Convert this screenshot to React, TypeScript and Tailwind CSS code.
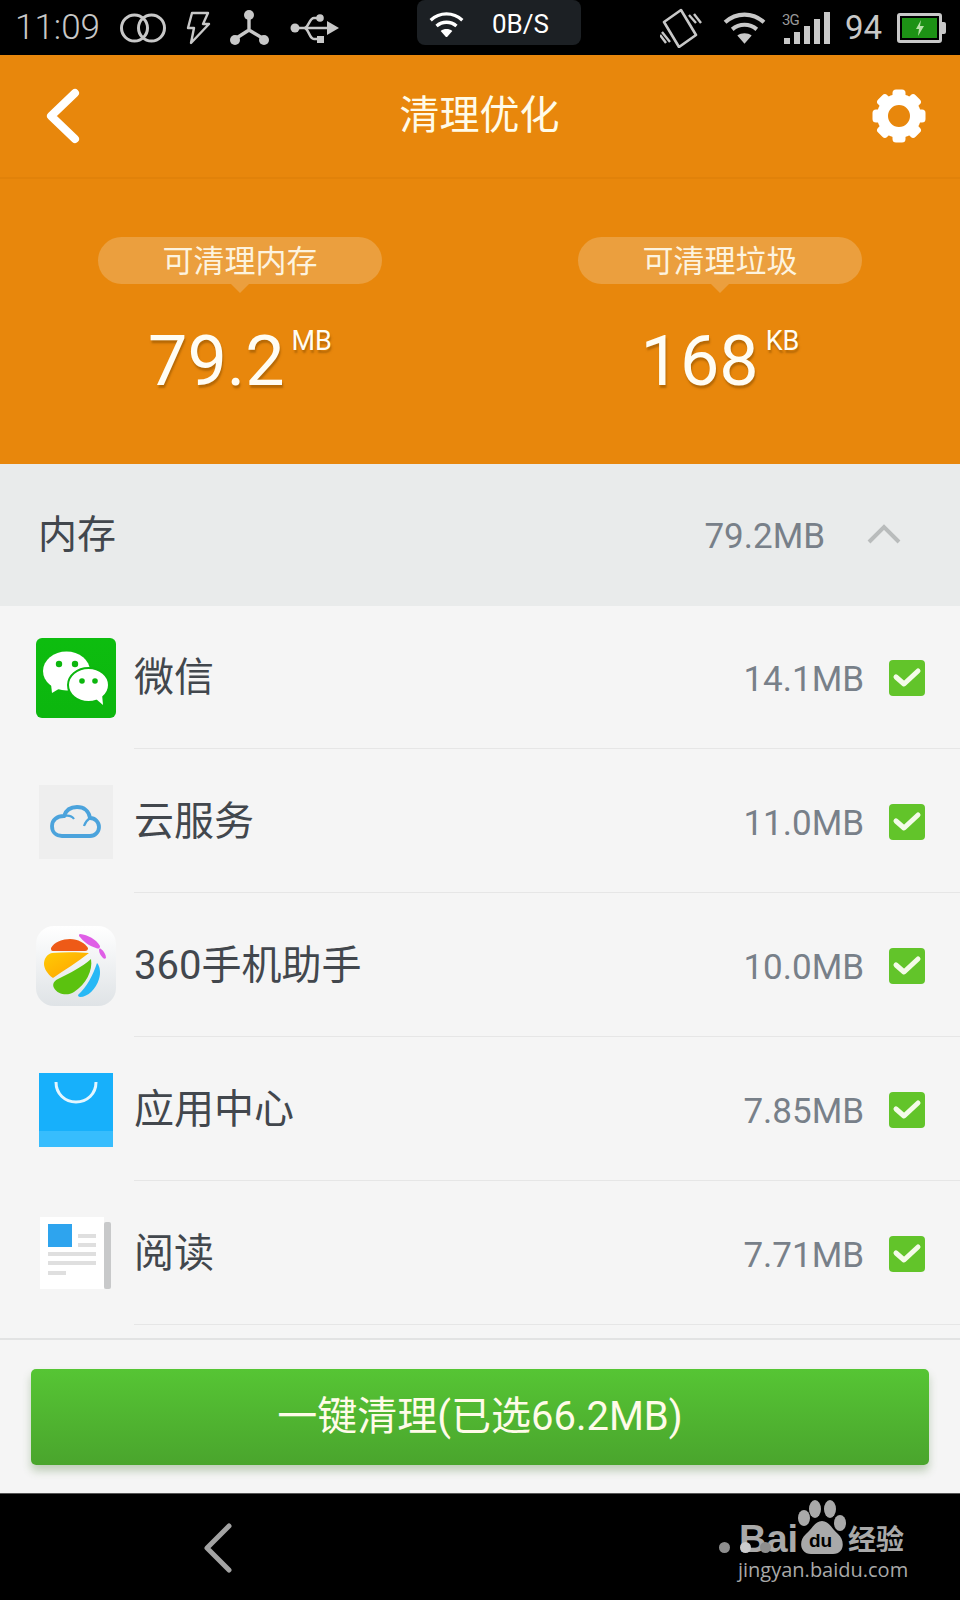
const font = { fontFamily: '"Roboto", "Noto Sans CJK SC", sans-serif' }

const rows = [
  { name: "微信", size: "14.1MB", icon: <WeChatIcon /> },
  { name: "云服务", size: "11.0MB", icon: <CloudIcon /> },
  { name: "360手机助手", size: "10.0MB", icon: <AssistantIcon /> },
  { name: "应用中心", size: "7.85MB", icon: <BagIcon /> },
  { name: "阅读", size: "7.71MB", icon: <ReaderIcon /> },
]

function WeChatIcon() {
  return (
    <svg width="80" height="80" viewBox="0 0 80 80">
      <defs>
        <linearGradient id="wx" x1="0" y1="0" x2="0" y2="1">
          <stop offset="0" stopColor="#0dbd0f" />
          <stop offset="1" stopColor="#0cb60e" />
        </linearGradient>
      </defs>
      <rect width="80" height="80" rx="6" fill="url(#wx)" />
      <ellipse cx="30.5" cy="33" rx="23.5" ry="19.5" fill="#fff" />
      <path d="M15 46l1 9 10-6z" fill="#fff" />
      <ellipse cx="52.5" cy="47" rx="20.5" ry="17" fill="#fff" stroke="#0cb60e" strokeWidth="2" />
      <path d="M60 61l7 6-1-11z" fill="#fff" />
      <circle cx="23" cy="26" r="3.2" fill="#0cb60e" />
      <circle cx="39" cy="26" r="3.2" fill="#0cb60e" />
      <circle cx="46" cy="43" r="2.8" fill="#0cb60e" />
      <circle cx="59" cy="43" r="2.8" fill="#0cb60e" />
    </svg>
  )
}

function CloudIcon() {
  return (
    <svg width="74" height="74" viewBox="0 0 74 74">
      <rect width="74" height="74" fill="#eeeeee" />
      <path d="M23 51h28c5 0 9-4 9-9s-4-9-9-9c-1-7-6-11-13-11-6 0-11 3-13 9-7 0-12 4-12 10 0 6 4 10 10 10z" fill="none" stroke="#4ba3dc" strokeWidth="3.8" />
      <path d="M25 31c5-1 8 0 10 3M45 41c1-3 3-6 6-8" fill="none" stroke="#4ba3dc" strokeWidth="2.2" />
    </svg>
  )
}

function AssistantIcon() {
  return (
    <svg width="80" height="80" viewBox="0 0 80 80">
      <defs>
        <linearGradient id="tile" x1="0" y1="0" x2="0" y2="1">
          <stop offset="0" stopColor="#ffffff" />
          <stop offset="1" stopColor="#dfe3e6" />
        </linearGradient>
        <linearGradient id="sun" x1="0" y1="0" x2="1" y2="1">
          <stop offset="0" stopColor="#ffcb05" />
          <stop offset="1" stopColor="#ff9f00" />
        </linearGradient>
      </defs>
      <rect width="80" height="80" rx="18" fill="url(#tile)" />
      <path d="M15 22C18 16 27 13 34 13 42 13 49 17 52 22 52 24 51 25 49 25H17C15 25 15 23 15 22Z" fill="#ee5a17" />
      <path d="M16 27C28 26 42 26 53 27 42 36 28 44 17 52 11 48 8 42 8 38 8 33 11 28 16 27Z" fill="url(#sun)" />
      <path d="M55 33C57 45 50 58 38 66 32 70 22 69 18 62 16 58 18 55 22 53 34 47 46 41 55 33Z" fill="#5bc20f" />
      <path d="M61 37C64 40 65 47 63 53 60 63 52 71 44 71 43 71 42 70 42 69 51 61 57 49 61 37Z" fill="#27b8f5" />
      <path d="M44 8C52 9 60 13 64 20 64 23 62 23 60 22 53 20 47 15 43 10 43 9 43 8 44 8Z" fill="#df5ee6" />
      <path d="M65 23C68 25 70 29 70 32 69 33 68 33 67 32 65 30 63 27 63 24 63 23 64 22 65 23Z" fill="#df5ee6" />
    </svg>
  )
}

function BagIcon() {
  return (
    <svg width="74" height="74" viewBox="0 0 74 74">
      <rect width="74" height="74" fill="#17b0fb" />
      <rect y="58" width="74" height="16" fill="#37bdfd" />
      <path d="M17 9c0 12 9 20 20 20s20-8 20-20" fill="none" stroke="#e4f6ff" strokeWidth="3" />
    </svg>
  )
}

function ReaderIcon() {
  return (
    <svg width="72" height="74" viewBox="0 0 72 74">
      <rect width="64" height="72" fill="#fff" />
      <rect x="64" y="5" width="7" height="67" rx="2" fill="#c8c9ca" />
      <rect x="8" y="7" width="24" height="23" fill="#2ea4ee" />
      <rect x="38" y="17" width="18" height="4" fill="#dfdfdf" />
      <rect x="38" y="26" width="18" height="4" fill="#dfdfdf" />
      <rect x="8" y="35" width="48" height="4" fill="#dfdfdf" />
      <rect x="8" y="44" width="48" height="4" fill="#dfdfdf" />
      <rect x="8" y="54" width="18" height="4" fill="#dfdfdf" />
    </svg>
  )
}

function Checkbox() {
  return (
    <svg width="36" height="36" viewBox="0 0 36 36">
      <rect width="36" height="36" rx="4" fill="#62c42a" />
      <path d="M7 17l8 7L29 11" fill="none" stroke="#f4fbe9" strokeWidth="5" strokeLinecap="round" strokeLinejoin="round" />
    </svg>
  )
}

function StatusIcons() {
  return (
    <svg width="222" height="40" viewBox="0 0 222 40" fill="none" stroke="#c8c8c8">
      <circle cx="14.5" cy="20" r="13" strokeWidth="3" />
      <circle cx="31.5" cy="20" r="13" strokeWidth="3" />
      <path d="M72 5h16l-5 11h6L71 35l3-15h-6z" strokeWidth="2.4" strokeLinejoin="round" />
      <g fill="#c8c8c8" stroke="none">
        <circle cx="129" cy="7" r="5" />
        <circle cx="115" cy="32" r="5" />
        <circle cx="144" cy="32" r="5" />
      </g>
      <path d="M129 8v14M129 22l-14 9M129 22l15 9" strokeWidth="3.4" />
      <circle cx="175" cy="20" r="4.5" fill="#c8c8c8" stroke="none" />
      <path d="M175 20h33M184 20c5 0 5-10 10-10h5M184 20c5 0 5 11 10 11h5" strokeWidth="2.6" />
      <path d="M207 13l12 7-12 7z" fill="#c8c8c8" stroke="none" />
      <circle cx="200" cy="10" r="3.8" fill="#c8c8c8" stroke="none" />
      <rect x="197" y="28" width="7" height="7" fill="#c8c8c8" stroke="none" />
    </svg>
  )
}

function WifiIcon({ color, width }: { color: string; width: number }) {
  return (
    <svg width={width} viewBox="0 0 42 32" fill="none" stroke={color}>
      <path d="M2 11c11-10 27-10 38 0" strokeWidth="4" />
      <path d="M9 18c7-6 17-6 24 0" strokeWidth="4" />
      <path d="M21 32l-7-8c4-3 10-3 14 0z" fill={color} stroke="none" />
    </svg>
  )
}

function RightStatus() {
  return (
    <div className="ml-auto flex items-center">
      <svg width="42" height="40" viewBox="0 0 42 40" fill="none" stroke="#c8c8c8" className="mr-[21px]">
        <path d="M4 14L21 2l15 25-17 12z" strokeWidth="2.6" strokeLinejoin="round" />
        <path d="M0 27l6 8M2 24l8 10M29 7l7 8M34 6l7 9" strokeWidth="2.4" />
      </svg>
      <div className="mr-[16px] flex w-[43px]"><WifiIcon color="#c8c8c8" width={43} /></div>
      <div className="relative mr-[15px] flex h-[32px] w-[48px] items-end gap-[4px] pl-[2px]">
        <span className="absolute left-0 top-[1px] text-[15px] leading-[15px] tracking-tighter text-[#999999]">3G</span>
        <div className="h-[6px] w-[6px] bg-[#c8c8c8]" />
        <div className="h-[12px] w-[6px] bg-[#c8c8c8]" />
        <div className="h-[18px] w-[6px] bg-[#c8c8c8]" />
        <div className="h-[25px] w-[6px] bg-[#c8c8c8]" />
        <div className="h-[32px] w-[6px] bg-[#c8c8c8]" />
      </div>
      <span className="mr-[15px] text-[33px] leading-none text-[#c8c8c8]">94</span>
      <div className="relative flex h-[30px] w-[45px] items-center justify-center rounded-[3px] border-[3px] border-[#c8c8c8]">
        <div className="flex h-[20px] w-[35px] items-center justify-center bg-[#1d9215]">
          <svg width="10" height="16" viewBox="0 0 10 16"><path d="M6 0L1 9h3l-1 7 6-10H5z" fill="#b8e0a8" /></svg>
        </div>
        <div className="absolute right-[-7px] top-[6px] h-[12px] w-[4px] rounded-r-[2px] bg-[#c8c8c8]" />
      </div>
    </div>
  )
}

function Stat({ label, value, unit }: { label: string; value: string; unit: string }) {
  return (
    <div className="flex w-[284px] flex-col items-center">
      <div className="flex h-[47px] w-[284px] items-center justify-center rounded-full bg-[#eb9f3e] pt-[3px] text-[31px] text-[#fdf3df]">{label}</div>
      <div className="h-0 w-0 border-x-[9px] border-t-[9px] border-x-transparent border-t-[#eb9f3e]" />
      <div className="mt-[33px] flex items-start text-[#fffdf4] [text-shadow:1px_3px_2px_rgba(140,80,0,0.55)]">
        <span className="text-[70px] leading-[70px]">{value}</span>
        <span className="ml-[7px] text-[27px] leading-[30px]">{unit}</span>
      </div>
    </div>
  )
}

export default function App() {
  return (
    <div className="flex h-[1600px] w-[960px] flex-col overflow-hidden bg-[#f5f5f5]" style={font}>
      <div className="flex h-[55px] shrink-0 items-center bg-black pl-[15px] pr-[18px]">
        <div className="flex w-[402px] items-center">
          <span className="w-[105px] text-[35px] font-light leading-none text-[#c8c8c8]">11:09</span>
          <StatusIcons />
        </div>
        <div className="flex h-[45px] w-[164px] items-center gap-[28px] self-start rounded-b-[8px] rounded-t-[8px] bg-[#1c2024] pl-[12px] pt-[3px]">
          <WifiIcon color="#ffffff" width={35} />
          <span className="text-[26px] leading-none text-white">0B/S</span>
        </div>
        <RightStatus />
      </div>

      <div className="flex h-[124px] shrink-0 items-center justify-between border-b-2 border-[#e1820a] bg-[#e8870c] pb-[1px] pl-[43px] pr-[34px]">
        <svg width="40" height="56" viewBox="0 0 40 56" fill="none">
          <path d="M32 5L8 28l24 23" stroke="#fff" strokeWidth="8" strokeLinecap="round" strokeLinejoin="round" />
        </svg>
        <span className="ml-[4px] text-[40px] leading-none text-[#fffbe8]">清理优化</span>
        <svg width="54" height="54" viewBox="-27 -27 54 54">
          <circle r="16.5" fill="none" stroke="#fff" strokeWidth="11" />
          <g fill="#fff">
            {[0, 45, 90, 135, 180, 225, 270, 315].map((deg) => (
              <rect key={deg} x="-6.5" y="-26.5" width="13" height="12" rx="3.5" transform={`rotate(${deg})`} />
            ))}
          </g>
        </svg>
      </div>

      <div className="flex h-[285px] shrink-0 justify-between bg-[#e8870c] pl-[98px] pr-[98px] pt-[58px]">
        <Stat label="可清理内存" value="79.2" unit="MB" />
        <Stat label="可清理垃圾" value="168" unit="KB" />
      </div>

      <div className="flex h-[142px] shrink-0 items-center justify-between bg-[#e9ebeb] pl-[38px] pr-[59px]">
        <span className="text-[39px] leading-none text-[#42474d]">内存</span>
        <div className="flex items-center gap-[42px]">
          <span className="mt-[2px] text-[35px] leading-none text-[#788089]">79.2MB</span>
          <svg width="34" height="20" viewBox="0 0 34 20" fill="none" className="mb-[3px]">
            <path d="M2 18L17 3l15 15" stroke="#b9bcbc" strokeWidth="4" />
          </svg>
        </div>
      </div>

      <div className="-mt-px flex-1">
        {rows.map((row) => (
          <div key={row.name} className="flex h-[144px] items-center pl-[36px]">
            <div className="flex w-[80px] shrink-0 justify-center pt-[2px]">{row.icon}</div>
            <div className="ml-[18px] flex h-full flex-1 items-center justify-between border-b border-[#e6e6e6] pr-[35px] pt-[2px]">
              <span className="text-[40px] leading-none text-[#42474d]">{row.name}</span>
              <div className="flex items-center gap-[25px]">
                <span className="mt-[4px] text-[35px] leading-none text-[#788089]">{row.size}</span>
                <Checkbox />
              </div>
            </div>
          </div>
        ))}
      </div>

      <div className="flex h-[155px] shrink-0 items-start border-t-2 border-[#e2e3e3] bg-[#f5f5f5] px-[31px] pt-[29px]">
        <button className="h-[96px] w-[898px] rounded-[5px] bg-gradient-to-b from-[#56c534] to-[#4aa52d] text-[40px] text-[#fffbe8] shadow-[0_6px_8px_rgba(70,120,50,0.3)]">
          一键清理(已选66.2MB)
        </button>
      </div>

      <div className="relative flex h-[107px] shrink-0 items-start border-t border-[#555555] bg-black pl-[203px] pt-[29px]">
        <svg width="30" height="50" viewBox="0 0 30 50" fill="none">
          <path d="M26 3L4 25l22 22" stroke="#a3a3a3" strokeWidth="5" strokeLinecap="round" strokeLinejoin="round" />
        </svg>
        <div className="absolute left-[720px] top-[5px] h-[98px] w-[200px] text-[#a9a9a9]">
          <span className="absolute left-[-1px] top-[43px] h-[11px] w-[11px] rounded-full bg-[#8e8e8e]" />
          <span className="absolute left-[19px] top-[16px] text-[38px] font-bold leading-[48px]" style={{ fontFamily: '"Liberation Sans", sans-serif' }}>Bai</span>
          <svg width="56" height="60" viewBox="0 0 56 60" className="absolute left-[75px] top-0">
            <g fill="#a9a9a9">
              <ellipse cx="9" cy="19" rx="6" ry="8" />
              <ellipse cx="20" cy="10" rx="6" ry="9" />
              <ellipse cx="35" cy="10" rx="6" ry="9" />
              <ellipse cx="45" cy="24" rx="6" ry="8" />
              <path d="M27 22C34 22 37 30 43 35 50 41 50 55 38 55H16C5 55 3 42 11 35 17 30 20 22 27 22Z" />
            </g>
          </svg>
          <span className="absolute left-[89px] top-[31px] text-[19px] font-bold leading-[22px] text-black" style={{ fontFamily: '"Liberation Sans", sans-serif' }}>du</span>
          <span className="absolute left-[128px] top-[22px] text-[28px] font-bold leading-[34px]" style={{ fontFamily: '"Noto Sans CJK SC", sans-serif' }}>经验</span>
          <span className="absolute left-[18px] top-[58px] text-[20px] leading-[26px]" style={{ fontFamily: '"Open Sans", sans-serif' }}>jingyan.baidu.com</span>
          <span className="absolute left-[20px] top-[43px] h-[11px] w-[11px] rounded-full bg-[#cccccc]" />
          <span className="absolute left-[40px] top-[43px] h-[11px] w-[11px] rounded-full bg-[#8e8e8e]" />
        </div>
      </div>
    </div>
  )
}
